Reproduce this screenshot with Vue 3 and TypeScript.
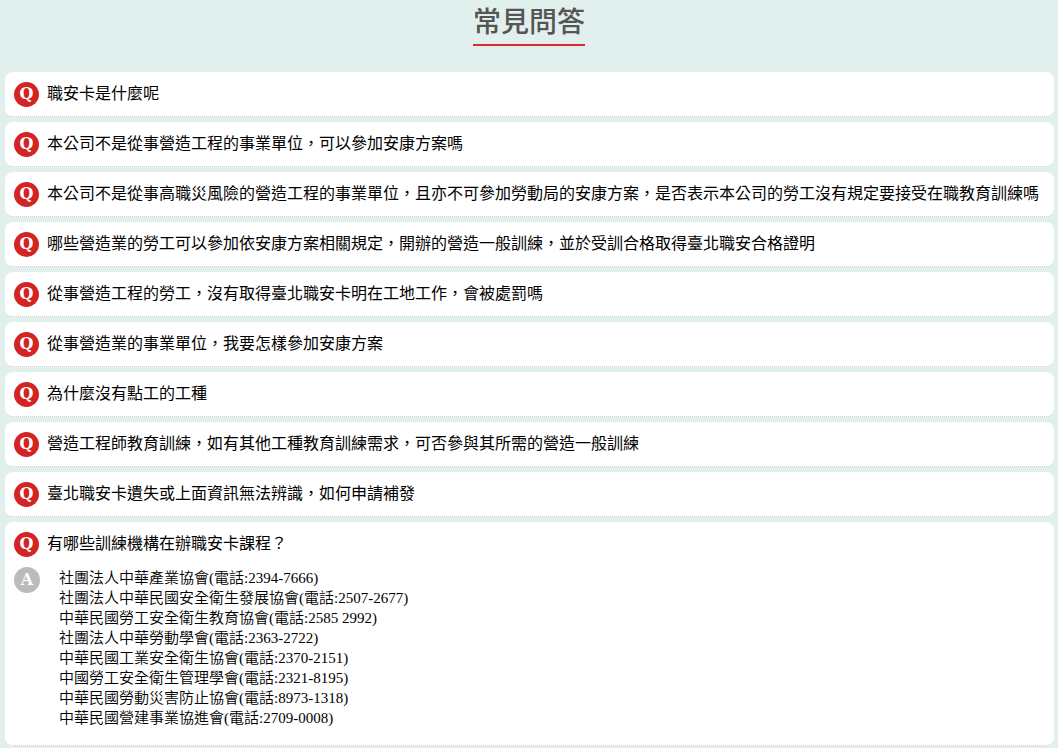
<script setup lang="ts">
import { ref } from 'vue'

interface Faq {
  question: string
  answer: string[]
}

const faqs: Faq[] = [
  { question: '職安卡是什麼呢', answer: [] },
  { question: '本公司不是從事營造工程的事業單位，可以參加安康方案嗎', answer: [] },
  {
    question:
      '本公司不是從事高職災風險的營造工程的事業單位，且亦不可參加勞動局的安康方案，是否表示本公司的勞工沒有規定要接受在職教育訓練嗎',
    answer: [],
  },
  {
    question: '哪些營造業的勞工可以參加依安康方案相關規定，開辦的營造一般訓練，並於受訓合格取得臺北職安合格證明',
    answer: [],
  },
  { question: '從事營造工程的勞工，沒有取得臺北職安卡明在工地工作，會被處罰嗎', answer: [] },
  { question: '從事營造業的事業單位，我要怎樣參加安康方案', answer: [] },
  { question: '為什麼沒有點工的工種', answer: [] },
  { question: '營造工程師教育訓練，如有其他工種教育訓練需求，可否參與其所需的營造一般訓練', answer: [] },
  { question: '臺北職安卡遺失或上面資訊無法辨識，如何申請補發', answer: [] },
  {
    question: '有哪些訓練機構在辦職安卡課程？',
    answer: [
      '社團法人中華產業協會(電話:2394-7666)',
      '社團法人中華民國安全衛生發展協會(電話:2507-2677)',
      '中華民國勞工安全衛生教育協會(電話:2585 2992)',
      '社團法人中華勞動學會(電話:2363-2722)',
      '中華民國工業安全衛生協會(電話:2370-2151)',
      '中國勞工安全衛生管理學會(電話:2321-8195)',
      '中華民國勞動災害防止協會(電話:8973-1318)',
      '中華民國營建事業協進會(電話:2709-0008)',
    ],
  },
]

const openIndex = ref<number>(9)

function toggle(index: number): void {
  openIndex.value = openIndex.value === index ? -1 : index
}
</script>

<template>
  <main class="page" lang="zh-Hant">
    <h1 class="title">常見問答</h1>
    <ul class="list">
      <li v-for="(faq, i) in faqs" :key="i" class="card">
        <button class="question" type="button" :aria-expanded="openIndex === i" @click="toggle(i)">
          <span class="badge red">Q</span>
          <span class="label">{{ faq.question }}</span>
        </button>
        <div v-if="openIndex === i && faq.answer.length" class="answer">
          <span class="badge grey">A</span>
          <p class="lines">
            <span v-for="line in faq.answer" :key="line" class="line">{{ line }}</span>
          </p>
        </div>
      </li>
    </ul>
  </main>
</template>

<style>
body {
  margin: 0;
  background: #e1f0ed;
}
</style>

<style scoped>
.page {
  display: flex;
  flex-direction: column;
  align-items: center;
  font-family: 'Liberation Sans', 'Noto Sans CJK TC', sans-serif;
  color: #000;
}

.title {
  margin: 0 0 26px;
  padding-top: 2px;
  border-bottom: 2px solid #d92b2b;
  color: #555;
  font-size: 28px;
  font-weight: 500;
  line-height: 42px;
}

.list {
  box-sizing: border-box;
  display: flex;
  flex-direction: column;
  gap: 5px;
  width: 100%;
  margin: 0;
  padding: 0 4px 3px 5px;
  list-style: none;
}

.card {
  background: #fff;
  border-bottom: 1px dotted #ccc;
  border-radius: 8px;
}

.question {
  display: flex;
  gap: 8px;
  width: 100%;
  margin: 0;
  padding: 10px 9px 9px;
  border: 0;
  background: none;
  color: inherit;
  font: inherit;
  font-size: 16px;
  text-align: left;
  cursor: pointer;
}

.label {
  line-height: 24px;
}

.badge {
  flex: none;
  border-radius: 50%;
  color: #fff;
  font-family: 'DejaVu Serif', serif;
  font-size: 16px;
  font-weight: 700;
  text-align: center;
}

.red {
  width: 25px;
  height: 25px;
  background: #d42323;
  line-height: 24px;
}

.grey {
  width: 26px;
  height: 26px;
  background: #bbb;
  line-height: 26px;
}

.answer {
  display: flex;
  gap: 19px;
  padding: 1px 9px 17px;
  font-family: 'Liberation Serif', 'Noto Sans CJK TC', serif;
  font-size: 15px;
}

.lines {
  margin: 0;
  padding-top: 1px;
  font-weight: 350;
  line-height: 20px;
}

.line {
  display: block;
}
</style>
